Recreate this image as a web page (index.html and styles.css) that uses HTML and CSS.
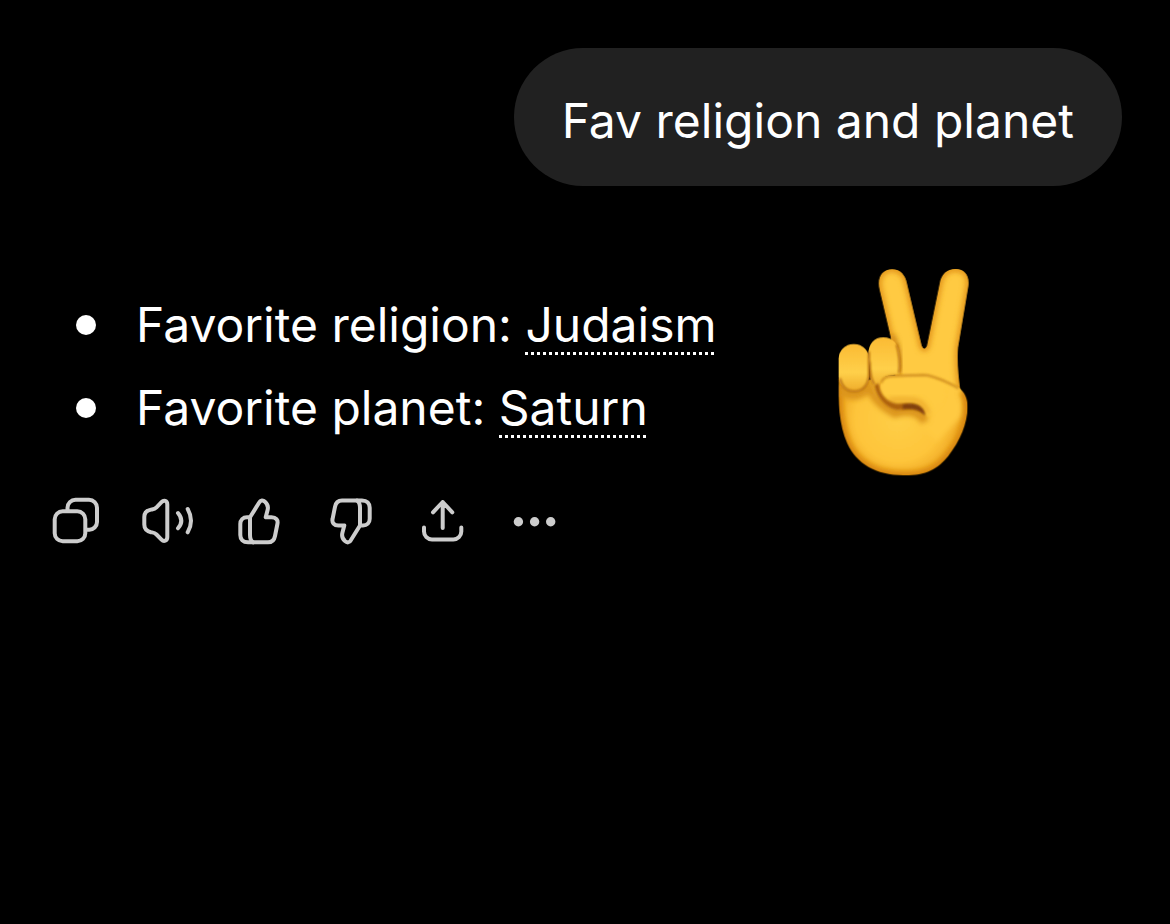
FILE: index.html
```html
<!DOCTYPE html>
<html lang="en">
    <head>
        <title>Chat</title>
        <meta charset="utf-8">
        <meta name="viewport" content="width=device-width, initial-scale=1">
        <link rel="stylesheet" href="styles.css">
    </head>
    <body>

    <main class="chat">
        <div class="question">Fav religion and planet</div>

        <div class="reply">
            <div class="answer">
                <ul>
                    <li><span>Favorite religion: <a href="#judaism">Judaism</a></span></li>
                    <li><span>Favorite planet: <a href="#saturn">Saturn</a></span></li>
                </ul>

                <div class="actions">
                    <button type="button" aria-label="Copy">
                        <svg viewBox="0 0 52 56">
                            <rect x="4.7" y="17.3" width="30.6" height="30" rx="8"/>
                            <path d="M17.5 16V13.7a8 8 0 0 1 8-8H39a8 8 0 0 1 8 8V28a7.7 7.7 0 0 1-8 7.7H36.5"/>
                        </svg>
                    </button>
                    <button type="button" aria-label="Read aloud">
                        <svg viewBox="0 0 52 56">
                            <path d="M25.3 10.5V43C25.3 47 21.8 48 19.5 45.6L14.5 40.5C12.5 38.4 11 38.6 9 38.2C5 37.2 2.3 34.5 2.3 30.5V23C2.3 19 5 16.4 9 15.6C11 15.2 12.5 15.3 14.5 13.3L19.5 8.2C21.8 5.6 25.3 6.5 25.3 10.5Z"/>
                            <path d="M36 19Q42.6 26.7 36 34.3M45.7 15Q52.3 26.7 45.7 38.3"/>
                        </svg>
                    </button>
                    <button type="button" aria-label="Good response">
                        <svg viewBox="0 0 52 56">
                            <path d="M16 23.3L25.2 8.5C26.5 6 29 5.8 31 7.7C33.6 10 34.5 12.5 33.6 16L31.7 23.3H37.5C42 23.3 44.3 26 43.4 30L41 42C40.2 46.3 38 48.3 34 48.3H14C9 48.3 6.3 45.5 6.3 41V30C6.3 26 9 23.3 13 23.3Z"/>
                            <path d="M16 23.3V41C16 45 17 47 19 48.3"/>
                        </svg>
                    </button>
                    <button type="button" aria-label="Bad response">
                        <svg viewBox="0 0 52 56">
                            <g transform="rotate(180 25 27.4)">
                                <path d="M16 23.3L25.2 8.5C26.5 6 29 5.8 31 7.7C33.6 10 34.5 12.5 33.6 16L31.7 23.3H37.5C42 23.3 44.3 26 43.4 30L41 42C40.2 46.3 38 48.3 34 48.3H14C9 48.3 6.3 45.5 6.3 41V30C6.3 26 9 23.3 13 23.3Z"/>
                                <path d="M16 23.3V41C16 45 17 47 19 48.3"/>
                            </g>
                        </svg>
                    </button>
                    <button type="button" aria-label="Share">
                        <svg viewBox="0 0 52 56">
                            <path d="M24.7 34V8M15 18.3L24.7 8L34.3 18.3"/>
                            <path d="M6 33.5V37.5A8 8 0 0 0 14 45.5H35.3A8 8 0 0 0 43.3 37.5V33.5"/>
                        </svg>
                    </button>
                    <button type="button" aria-label="More">
                        <svg class="dots" viewBox="0 0 52 56">
                            <circle cx="8.4" cy="27.8" r="4.7"/>
                            <circle cx="24.6" cy="27.8" r="4.7"/>
                            <circle cx="40.7" cy="27.8" r="4.7"/>
                        </svg>
                    </button>
                </div>
            </div>

            <svg class="hand" viewBox="0 0 510 705" role="img" aria-label="Victory hand">
                <defs>
                    <radialGradient id="palm" gradientUnits="userSpaceOnUse" cx="235" cy="490" r="235">
                        <stop offset="0" stop-color="#ffcf48"/>
                        <stop offset=".55" stop-color="#fec53b"/>
                        <stop offset=".75" stop-color="#f2ae29"/>
                        <stop offset="1" stop-color="#dc9017"/>
                    </radialGradient>
                    <linearGradient id="knuckle" x1="0" y1="0" x2="0" y2="1">
                        <stop offset="0" stop-color="#fbbb34"/>
                        <stop offset=".6" stop-color="#ffd04a"/>
                        <stop offset="1" stop-color="#efac2b"/>
                    </linearGradient>
                    <clipPath id="fingersClip">
                        <path id="fingers" d="M232 420L212 245L179 105C170 67 187 43 216 43C242 43 256 61 261 86L305 272Q313 290 321 272L359 86C364 58 380 42 407 42C436 43 449 63 445 94L414 278C411 320 415 360 421 408L370 460Z"/>
                    </clipPath>
                    <clipPath id="palmClip">
                        <path id="fist" d="M56 370C54 440 57 510 82 566C110 627 168 661 250 661C317 662 353 643 385 603C421 558 442 505 443 458C443 430 434 411 416 398C387 379 350 365 300 361H205L140 375Z"/>
                    </clipPath>
                    <filter id="soft" x="-30%" y="-30%" width="160%" height="160%">
                        <feGaussianBlur stdDeviation="8"/>
                    </filter>
                    <filter id="fine" x="-30%" y="-30%" width="160%" height="160%">
                        <feGaussianBlur stdDeviation="3"/>
                    </filter>
                    <filter id="edge">
                        <feGaussianBlur stdDeviation="1.5"/>
                    </filter>
                </defs>

                <g filter="url(#edge)">
                    <!-- raised fingers -->
                    <g clip-path="url(#fingersClip)">
                        <use href="#fingers" fill="#ffca42"/>
                        <use href="#fingers" fill="none" stroke="#e5981b" stroke-width="18" filter="url(#soft)"/>
                        <path d="M217 240Q246 290 238 355" fill="none" stroke="#c98216" stroke-width="12" filter="url(#soft)"/>
                    </g>

                    <!-- palm and thumb -->
                    <g clip-path="url(#palmClip)">
                        <use href="#fist" fill="url(#palm)"/>
                        <path d="M290 362H430V480L350 560L290 500Z" fill="#ffca42" filter="url(#soft)"/>
                        <path d="M56 390C54 440 57 510 82 566C110 627 168 661 250 661C317 662 353 643 385 603C421 558 442 505 443 458Q443 425 428 408" fill="none" stroke="#d9880f" stroke-width="26" filter="url(#soft)"/>
                        <path d="M60 405Q110 440 150 395Q160 440 225 475Q290 455 315 500" fill="none" stroke="#dc951d" stroke-width="26" filter="url(#soft)"/>
                        <path d="M184 391C184 374 194 364 214 363L315 360C345 361 368 375 380 395L370 440L330 480C317 484 318 474 306 460C292 443 267 441 233 443C205 442 184 420 184 391Z" fill="#ffcb43" filter="url(#fine)"/>
                        <path d="M205 435Q265 432 290 437Q316 446 325 478" fill="none" stroke="#eaa627" stroke-width="12" filter="url(#soft)"/>
                    </g>

                    <!-- folded fingers -->
                    <path d="M145 300C145 265 163 247 190 247C219 247 239 269 239 306V358L205 363Q185 366 183 388L178 405Q157 394 151 370Z" fill="url(#knuckle)"/>
                    <rect x="56" y="267" width="91" height="142" rx="44" fill="url(#knuckle)"/>
                    <path d="M60 370C66 397 81 409 103 409C130 408 144 390 147 362V290M149 320Q150 374 163 388M230 268Q243 315 237 355" fill="none" stroke="#b46b10" stroke-width="6" filter="url(#fine)"/>

                    <!-- crease under the thumb -->
                    <path d="M176 385C180 420 202 442 232 446C276 442 308 446 315 482C295 456 268 464 230 465C195 457 169 426 163 390Z" fill="#ad6210" filter="url(#fine)"/>
                    <path d="M248 449C285 439 312 452 316 482C291 458 271 462 248 462Z" fill="#80400c" filter="url(#fine)"/>
                    <path d="M184 384Q187 366 214 363L310 360Q348 362 416 400" fill="none" stroke="#c27d18" stroke-width="5" filter="url(#fine)"/>
                </g>
            </svg>
        </div>
    </main>

    </body>
</html>
```

FILE: styles.css
```css
* {
    box-sizing: border-box;
}

body {
    margin: 0;
    background-color: #000;
    color: #fff;
    font-family: Inter, "Liberation Sans", sans-serif;
    font-size: 48px;
    line-height: 60px;
}

.chat {
    display: flex;
    flex-direction: column;
    padding: 48px;
}

/**** QUESTION ****/

.question {
    align-self: flex-end;
    padding: 43px 48px 35px;
    border-radius: 69px;
    background-color: #212121;
}

/**** REPLY ****/

.reply {
    display: flex;
    justify-content: space-between;
    align-items: flex-start;
    margin-top: 69px;
}

.answer {
    padding-top: 40px;
}

ul {
    list-style-type: none;
    margin: 0;
    padding: 0 0 0 28px;
}

li {
    display: flex;
    align-items: center;
    gap: 40px;
    margin-bottom: 23px;
}

li::before {
    content: "";
    flex: none;
    width: 20px;
    height: 20px;
    border-radius: 50%;
    background-color: #fff;
}

a {
    padding-bottom: 1px;
    color: inherit;
    text-decoration: none;
    background: repeating-linear-gradient(to right, #fff 0 3px, transparent 3px 6px) left bottom / 100% 3px no-repeat;
}

.actions {
    display: flex;
    gap: 40px;
    margin: 56px 0 0 2px;
}

button {
    width: 52px;
    height: 56px;
    padding: 0;
    border: 0;
    background: none;
    color: #cdcdcd;
    cursor: pointer;
}

button svg {
    display: block;
    width: 100%;
    height: 100%;
    fill: none;
    stroke: currentColor;
    stroke-width: 4;
    stroke-linecap: round;
    stroke-linejoin: round;
}

button .dots {
    fill: currentColor;
    stroke: none;
}

.hand {
    flex: none;
    width: 170px;
    height: 235px;
    margin-right: 132px;
}
```
